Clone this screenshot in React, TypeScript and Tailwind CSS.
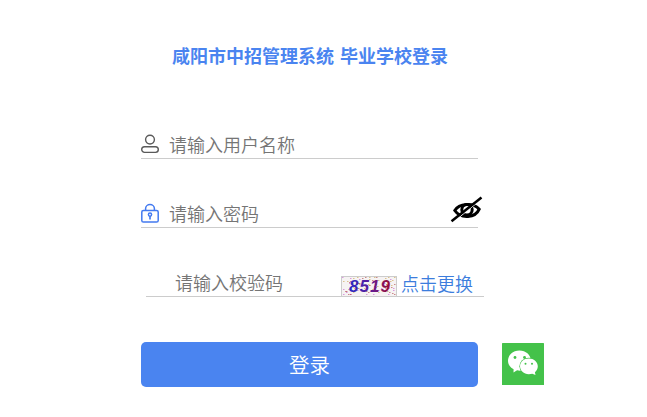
import { useState, type ReactNode } from "react";

const speckColors = ["#c65ad0", "#4c9a4c", "#c9a24a", "#5b6fd6", "#b04545", "#333333"];

const specks = Array.from({ length: 90 }, (_, i) => ({
  x: 1 + ((i * 37 + ((i * i * 11) % 17)) % 54),
  y: 1 + ((i * 13 + ((i * i * 7) % 23)) % 18),
  color: speckColors[(i * 5 + (i % 4)) % 6],
}));

function UserIcon() {
  return (
    <svg width="18" height="20" viewBox="0 0 18 20" fill="none" stroke="#5a5a5a" strokeWidth="1.4">
      <circle cx="9" cy="5.6" r="4.4" />
      <rect x="0.7" y="12.8" width="16.6" height="5.6" rx="2.8" />
    </svg>
  );
}

function LockIcon() {
  return (
    <svg width="18" height="20" viewBox="0 0 18 20" fill="none" stroke="#437af0" strokeWidth="1.5">
      <path d="M4.6 7.4V5.6a4.4 4.1 0 0 1 8.8 0v1.8" />
      <rect x="0.8" y="7.4" width="16.4" height="11.6" rx="1.6" />
      <circle cx="9" cy="11.6" r="1.6" />
      <path d="M9 13v3.6" strokeWidth="1.7" />
    </svg>
  );
}

function HiddenEyeIcon() {
  return (
    <svg width="34" height="28" viewBox="0 0 34 28" fill="none" stroke="#000">
      <path d="M4.8 14.5C9 7.5 23 6 29.2 13.2C25.5 22 11 23.5 4.8 14.5Z" strokeWidth="3" />
      <circle cx="17" cy="13.8" r="5.2" strokeWidth="3" />
      <path d="M4 25.5L31.8 3" stroke="#fff" strokeWidth="1" />
      <path d="M1.5 25.2L31.5 1.5" strokeWidth="2.5" />
    </svg>
  );
}

function Captcha() {
  return (
    <svg width="56" height="21" viewBox="0 0 56 21">
      <defs>
        <linearGradient id="ink" x1="0" x2="1">
          <stop offset="0" stopColor="#2828c4" />
          <stop offset="0.5" stopColor="#5c1c9c" />
          <stop offset="1" stopColor="#9c0c34" />
        </linearGradient>
      </defs>
      <rect x="0.5" y="0.5" width="55" height="20" fill="#f6f3f3" stroke="#ccc" />
      {specks.map((s, i) => (
        <rect key={i} x={s.x} y={s.y} width="1.5" height="1" fill={s.color} opacity="0.6" />
      ))}
      <text
        x="8"
        y="16"
        textLength="41"
        fontFamily="Liberation Sans, sans-serif"
        fontSize="17"
        fontWeight="bold"
        fontStyle="italic"
        fill="url(#ink)"
      >
        8519
      </text>
    </svg>
  );
}

function WechatIcon() {
  return (
    <svg width="42" height="42" viewBox="0 0 42 42">
      <rect width="42" height="42" rx="0.5" fill="#44c24a" />
      <path d="M17.5 7.5C10.8 7.5 6 12.2 6 17.8c0 3.8 2.2 6.6 5.6 8.5L11.5 29.5l3.6-2.2c1.5.4 3.2.4 5 .2L29 17.5C28.5 11.8 23.8 7.5 17.5 7.5Z" fill="#fff" />
      <ellipse cx="26.8" cy="23.2" rx="9.4" ry="8.5" fill="#44c24a" />
      <path d="M26.8 15.4c-5 0-8.800 3.500-8.800 7.900s3.800 7.900 8.800 7.900c1.300 0 2.500-.2 3.500-.5l3.200 1.400-.6-2.900c1.800-1.500 2.900-3.500 2.900-5.900 0-4.400-4-7.900-9-7.900Z" fill="#fff" />
      <g fill="#44c24a">
        <circle cx="13" cy="14.5" r="1.4" />
        <circle cx="22.5" cy="14.5" r="1.4" />
        <circle cx="23.5" cy="20.8" r="1" />
        <circle cx="30" cy="20.8" r="1" />
      </g>
    </svg>
  );
}

interface FieldProps {
  icon?: ReactNode;
  placeholder: string;
  type?: string;
  className?: string;
  children?: ReactNode;
}

function Field({ icon, placeholder, type = "text", className = "", children }: FieldProps) {
  return (
    <div className={`flex h-[27px] items-center border-b border-[#ccc] ${className}`}>
      {icon && <span className="mb-[2px] shrink-0">{icon}</span>}
      <input
        type={type}
        placeholder={placeholder}
        className="mb-px h-[26px] w-0 min-w-0 flex-1 bg-transparent pl-[10px] text-[18px] font-[350] text-[#333] outline-none placeholder:text-[#757575] placeholder:opacity-100"
      />
      {children}
    </div>
  );
}

export default function App() {
  const [visible, setVisible] = useState(false);
  return (
    <main className="h-[417px] w-full overflow-hidden bg-white pl-[141px] pt-[42px] font-['Noto_Sans_CJK_SC',sans-serif]">
      <h1 className="w-[338px] whitespace-nowrap text-center text-[18px] leading-[27px] font-bold text-[#4a84f0] [word-spacing:2px]">
        咸阳市中招管理系统 毕业学校登录
      </h1>
      <form className="mt-[63px]" onSubmit={(e) => e.preventDefault()}>
        <Field icon={<UserIcon />} placeholder="请输入用户名称" className="w-[337px]" />
        <Field
          icon={<LockIcon />}
          placeholder="请输入密码"
          type={visible ? "text" : "password"}
          className="mt-[42px] w-[337px]"
        >
          <button type="button" onClick={() => setVisible(!visible)} className="-mr-[6px] -mt-[8px] shrink-0">
            <HiddenEyeIcon />
          </button>
        </Field>
        <Field placeholder="请输入校验码" className="mt-[42px] ml-[5px] w-[338px] pl-[19px]">
          <div className="mt-[6px] shrink-0">
            <Captcha />
          </div>
          <a
            href="#"
            className="mb-px ml-[4px] mr-[11px] whitespace-nowrap text-[18px] leading-[26px] font-[350] text-[#3c7ddd]"
          >
            点击更换
          </a>
        </Field>
        <div className="mt-[45px] flex items-start gap-6">
          <button
            type="submit"
            className="h-[45px] w-[337px] rounded-[5px] bg-[#4a84f0] text-[20.5px] font-[350] text-white"
          >
            登录
          </button>
          <span className="mt-px">
            <WechatIcon />
          </span>
        </div>
      </form>
    </main>
  );
}
